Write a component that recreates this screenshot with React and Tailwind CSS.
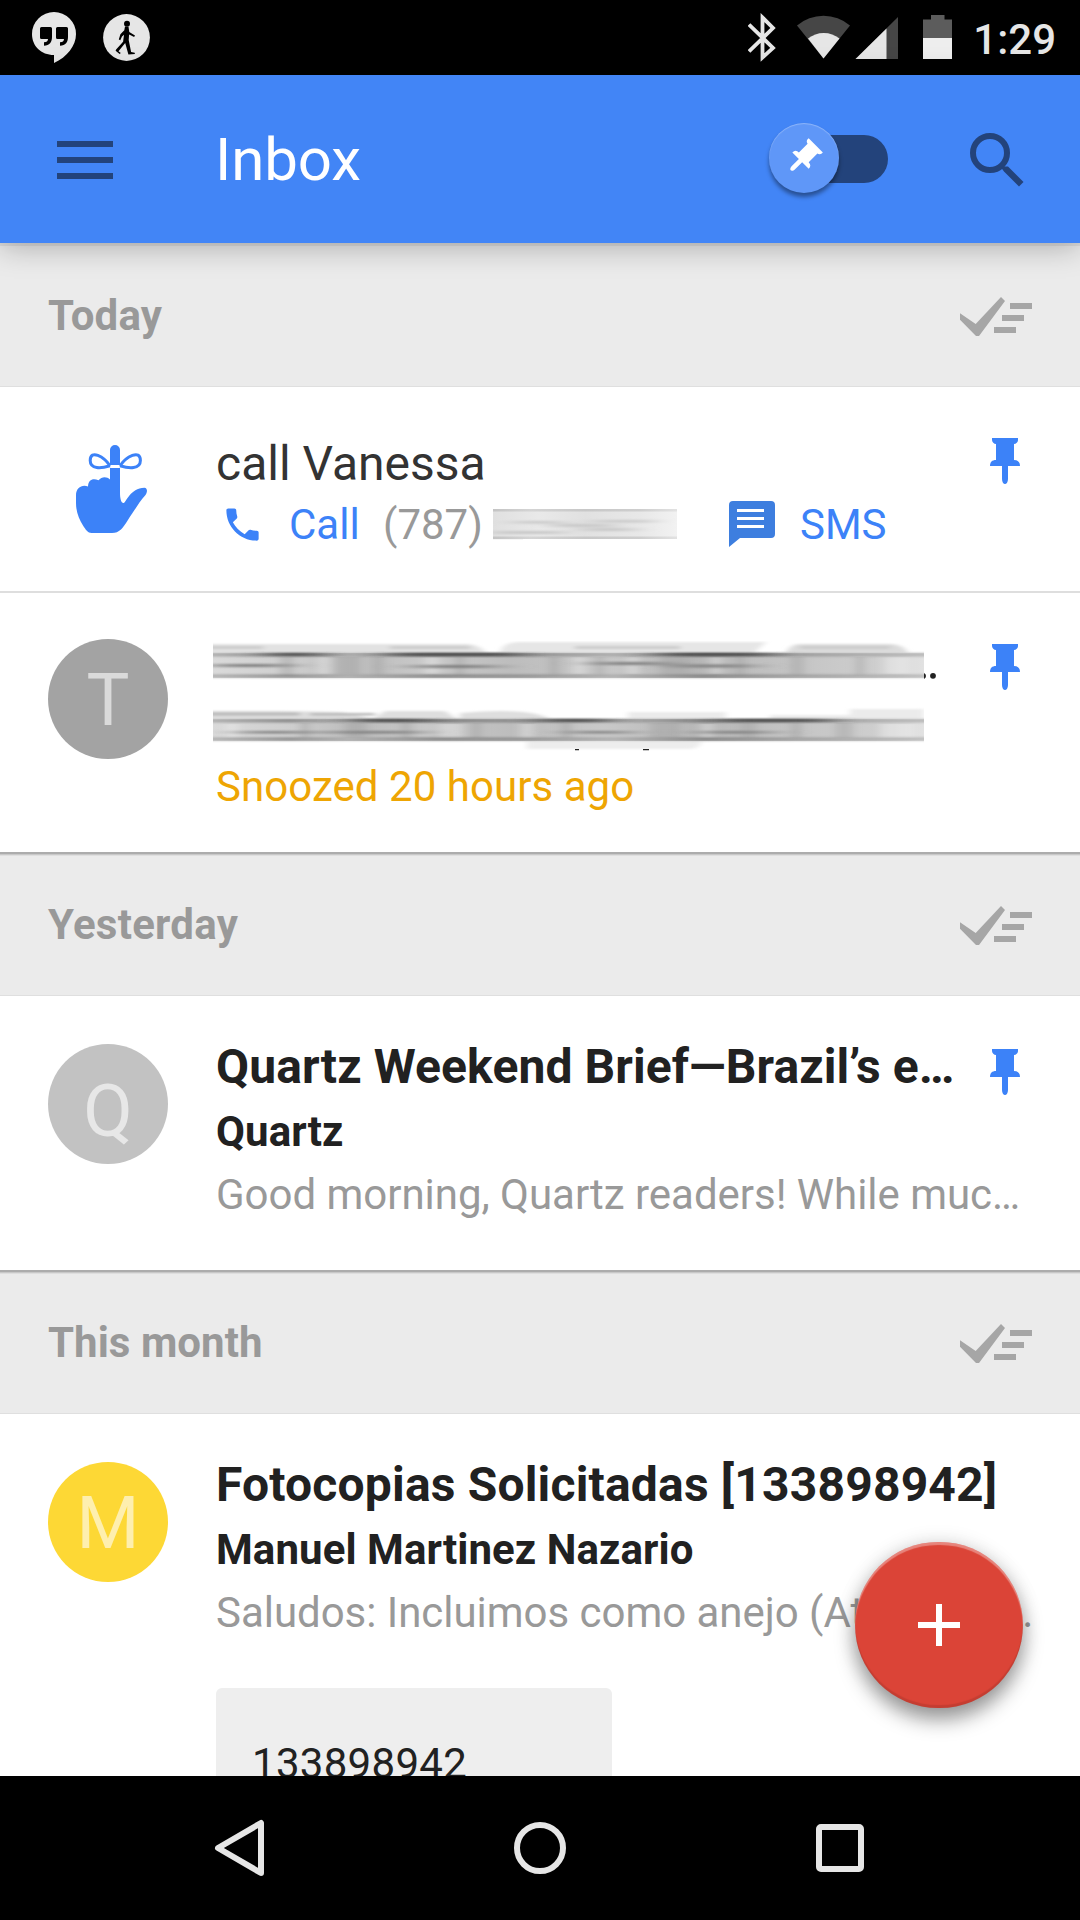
function StatusBar() {
  return (
    <div className="flex h-[75px] shrink-0 items-start justify-between bg-black">
      <div className="flex pl-8 pt-3">
        <svg className="h-[51px] w-11" viewBox="0 0 44 51">
          <path
            d="M22 0a22 22 0 0 0-22 22c0 12 9 21 22 21v8C35 45 44 34 44 22A22 22 0 0 0 22 0z"
            fill="#e6e6e6"
          />
          <path
            d="M9.500 15h9a1.500 1.500 0 0 1 1.500 1.500V25c0 5-2.500 8.700-8 8.700v-3.400c2.700 0 4-1.300 4-3.300h-6.500a1.500 1.500 0 0 1-1.500-1.500v-9A1.500 1.500 0 0 1 9.500 15zM25.500 15h9a1.500 1.500 0 0 1 1.500 1.500V25c0 5-2.500 8.700-8 8.700v-3.400c2.700 0 4-1.300 4-3.300h-6.500a1.500 1.500 0 0 1-1.500-1.500v-9A1.500 1.500 0 0 1 25.500 15z"
            fill="#000"
          />
        </svg>
        <svg className="ml-[27px] mt-0.5 h-[47px] w-[47px]" viewBox="0 0 47 47">
          <circle cx="23.500" cy="23.500" r="23.400" fill="#e6e6e6" />
          <circle cx="24" cy="9.800" r="3" fill="#000" />
          <path
            d="M22 12.500l3.500.3.800 5.200 5.700 3.500-.9 1.600-5-2.600-.4 5.500 2.400 12 3.600.7.200 1.400-6.500.3-3.200-11.500-6.700 8.300 2.300 1.900-1.200.9-4-3.200.5-1.300 7-7.800.9-7-2 1.800-1.700 3.700-1.500-.6 1.600-5.300 3.900-4z"
            fill="#000"
          />
        </svg>
      </div>
      <div className="flex pr-6">
        <svg className="h-[75px] w-[205px]" viewBox="748 0 205 75">
          <path
            d="M749 24.500L773 48 762.500 57.500V17.500L773 28 749 51.500"
            fill="none"
            stroke="#e6e6e6"
            strokeWidth="3.800"
          />
          <path d="M823.500 58.500L797 25.500a41 41 0 0 1 53 0z" fill="#464646" />
          <path d="M823.500 58.500L808 38.500a25 25 0 0 1 31.500 0z" fill="#e6e6e6" />
          <path d="M898 17v42h-42.500z" fill="#464646" />
          <path d="M886.500 28.500V59h-31z" fill="#e6e6e6" />
          <path d="M931 15h13.500v4.500h7.500V38h-29V19.500h8z" fill="#5c5c5c" />
          <path d="M923 38h29v21h-29z" fill="#eee" />
        </svg>
        <span className="pl-[20px] pt-[15px] text-[42px] font-medium leading-[49px] text-[#e6e6e6]">1:29</span>
      </div>
    </div>
  );
}

function AppBar() {
  return (
    <div className="relative z-10 flex h-[168px] shrink-0 items-center bg-[#4285f6] pl-[57px] shadow-[0_3px_0_rgba(0,0,0,0.06),0_4px_28px_rgba(0,0,0,0.27)]">
      <div className="flex w-[56px] flex-col gap-[10px] pt-[2px]">
        <div className="h-1.5 bg-[#23437b]" />
        <div className="h-1.5 bg-[#23437b]" />
        <div className="h-1.5 bg-[#23437b]" />
      </div>
      <h1 className="ml-[102px] pt-px text-[60px] font-normal leading-[70px] tracking-[-0.1px] text-white">Inbox</h1>
      <div className="ml-auto flex items-start pr-14">
        <div className="relative mt-1 h-12 w-[117px] rounded-full bg-[#23437b]">
          <div className="absolute -left-0.5 -top-3 flex h-[70px] w-[70px] items-center justify-center rounded-full bg-[#5f97f8] shadow-[0_4px_4px_rgba(0,0,0,0.4),inset_0_1px_1px_rgba(255,255,255,0.3)]">
            <svg className="mr-[3px] h-[46px] w-[30px] rotate-45" viewBox="0 0 30 46">
              <path d={PIN_PATH} fill="#fff" transform="translate(3.500 5) scale(.77)" />
            </svg>
          </div>
        </div>
        <svg className="ml-[82px] mt-0.5 h-[54px] w-[54px]" viewBox="0 0 54 54">
          <circle cx="20" cy="20" r="17" fill="none" stroke="#23437b" strokeWidth="6" />
          <path d="M34 33.500h4L53.500 49l-4.500 4.500L34 38.500l-3-4z" fill="#23437b" />
        </svg>
      </div>
    </div>
  );
}

const PIN_PATH =
  "M2 0h26v2c0 2-2 4-4 4v16c4 0 6 2 6 6H18v13c0 3-1.500 5-3 5s-3-2-3-5V28H0c0-4 2-6 6-6V6C4 6 2 4 2 2z";

function Pin({ className }) {
  return (
    <svg className={`h-[46px] w-[30px] shrink-0 ${className}`} viewBox="0 0 30 46">
      <path d={PIN_PATH} fill="#3c82f8" />
    </svg>
  );
}

function SectionHeader({ title, raised, titleClass = "" }) {
  return (
    <div
      className={`flex h-36 shrink-0 items-center justify-between border-b border-[#dfdfdf] bg-[#ebebeb] px-12 ${
        raised ? "shadow-[inset_0_2px_0_#acacac,inset_0_3px_0_#c8c8c8,inset_0_4px_0_#dedede]" : ""
      }`}
    >
      <h2 className={`pt-[3px] text-[42px] font-bold leading-[50px] text-[#999] ${titleClass}`}>{title}</h2>
      <svg className="mt-[3px] h-[39px] w-[72px]" viewBox="0 0 72 39" fill="#a6a6a6">
        <path d="M0 16.300L15.700 27 41 0l4 4L20.500 37l-1.500 2h-3L0 22.700z" />
        <path d="M50 6h22v6H50zM42 18h22v6H42zM34 30h22v6H34z" />
      </svg>
    </div>
  );
}

function Avatar({ letter, className, letterClass }) {
  return (
    <div className={`flex h-[120px] w-[120px] shrink-0 items-center justify-center rounded-full ${className}`}>
      <span className={`text-[72px] leading-[84px] ${letterClass}`}>{letter}</span>
    </div>
  );
}

function ReminderIcon() {
  return (
    <svg className="ml-7 mr-[69px] mt-[58px] h-[88px] w-[71px] shrink-0" viewBox="0 0 71 88">
      <path
        d="M34 20V5a5 5 0 0 1 10 0v15zM34 23h10v25c0 5 1 10 3.500 10S54 43 68.500 42.700c3 .3 3.200 4 1 7.300C64 56 60 63 56.500 68S48 82 45 84.500 40 88 36 88H15.500C12 88 9.500 84.500 7 80.500 3 74 0 67 0 58v-8c0-7 6-11 12-8.500.2-7 5-8.500 10.500-6.300C26 31 31 31.500 34 34.500z"
        fill="#3c82f8"
      />
      <path
        d="M34 20.800C28 12 14.300 3.800 14.200 15.500 14.300 24.500 25 23.500 34 20.800M44 20.800C50 12 64.300 3.800 64.400 15.500 64.300 24.500 53 23.500 44 20.800"
        fill="none"
        stroke="#3c82f8"
        strokeWidth="3"
      />
    </svg>
  );
}

// Smeared bar that hides a private phone number.
function SmearedNumber() {
  return (
    <svg className="ml-[11px] h-[32px] w-[184px] shrink-0" viewBox="0 0 184 32">
      <defs>
        <linearGradient id="num" x1="0" x2="1">
          <stop offset="0" stopColor="#e0e0e0" />
          <stop offset=".25" stopColor="#e9e9e9" />
          <stop offset=".5" stopColor="#e1e1e1" />
          <stop offset=".8" stopColor="#e8e8e8" />
          <stop offset="1" stopColor="#f2f2f2" />
        </linearGradient>
        <linearGradient id="numLine" x1="0" x2="1">
          <stop offset="0" stopColor="#c4c4c4" />
          <stop offset=".2" stopColor="#d4d4d4" />
          <stop offset=".5" stopColor="#c8c8c8" />
          <stop offset=".8" stopColor="#cecece" />
          <stop offset="1" stopColor="#e2e2e2" />
        </linearGradient>
        <filter id="numSmear" x="-20%" y="-20%" width="140%" height="140%">
          <feGaussianBlur stdDeviation="12 1.2" />
        </filter>
      </defs>
      <path d="M0 1h184v30H0z" fill="url(#num)" />
      <path d="M0 1h184v2.500H0zM0 28.500h184V31H0z" fill="url(#numLine)" />
      <path
        d="M20 13h50v2.500H20zM60 16h60v3H60zM0 23h70v3H0zM100 12h60v2.500h-60zM90 20h50v3H90z"
        fill="#c8c8c8"
        filter="url(#numSmear)"
      />
      <path d="M0 31h30v1H0z" fill="#f6f6f6" />
    </svg>
  );
}

// Smeared bars that hide a private subject and sender.
function SmearedText() {
  return (
    <svg className="-ml-[3px] h-[112px] w-[726px]" viewBox="213 641 726 112">
      <defs>
        <linearGradient id="body" x1="0" x2="1">
          <stop offset="0" stopColor="#dadada" />
          <stop offset=".12" stopColor="#cdcdcd" />
          <stop offset=".2" stopColor="#bcbcbc" />
          <stop offset=".3" stopColor="#c9c9c9" />
          <stop offset=".42" stopColor="#bdbdbd" />
          <stop offset=".55" stopColor="#c9c9c9" />
          <stop offset=".68" stopColor="#b7b7b7" />
          <stop offset=".8" stopColor="#c3c3c3" />
          <stop offset=".93" stopColor="#cecece" />
          <stop offset="1" stopColor="#e2e2e2" />
        </linearGradient>
        <linearGradient id="edge" x1="0" x2="1">
          <stop offset="0" stopColor="#b4b4b4" />
          <stop offset=".12" stopColor="#8a8a8a" />
          <stop offset=".2" stopColor="#adadad" />
          <stop offset=".32" stopColor="#828282" />
          <stop offset=".45" stopColor="#929292" />
          <stop offset=".56" stopColor="#adadad" />
          <stop offset=".68" stopColor="#808080" />
          <stop offset=".8" stopColor="#9c9c9c" />
          <stop offset="1" stopColor="#bcbcbc" />
        </linearGradient>
        <clipPath id="smearArea">
          <path d="M213 641h711v112H213z" />
        </clipPath>
        <filter id="streaks" filterUnits="userSpaceOnUse" x="150" y="636" width="840" height="120">
          <feGaussianBlur stdDeviation="18 1" />
        </filter>
        <filter id="blobs" filterUnits="userSpaceOnUse" x="150" y="636" width="840" height="120">
          <feGaussianBlur stdDeviation="4 0.6" />
        </filter>
        <filter id="soft" filterUnits="userSpaceOnUse" x="150" y="636" width="840" height="120">
          <feGaussianBlur stdDeviation="3 0.8" />
        </filter>
      </defs>
      <g clipPath="url(#smearArea)">
        <g filter="url(#soft)">
          <path d="M200 644h268q12 1 18 9H200z" fill="#e2e2e2" />
          <path d="M500 653q2-11 20-11h246l-12 11z" fill="#e6e6e6" />
          <path d="M786 653q4-9 14-9h92q12 1 16 9z" fill="#dcdcdc" />
          <path d="M200 711h83l60 1 30 7H200zM373 719l12-8h60l12 8zM460 713q70-6 90 6h-90z" fill="#dedede" />
          <path d="M628 712h98v7h-98zM770 715h80v-6h74v10H770z" fill="#ebebeb" />
          <path d="M527 741h175q-3 8-12 8H527z" fill="#ededed" />
          <path d="M200 646h63v3h-63zM390 646h80v3h-80zM575 646h105v3H575zM800 646h90v3h-90z" fill="#cbcbcb" />
          <path d="M200 712.500h100v3H200zM310 713h65v2.500h-65z" fill="#b8b8b8" />
        </g>
        <path d="M213 653h711v25H213z" fill="url(#body)" />
        <path d="M213 719h711v22H213z" fill="url(#body)" />
        <g fill="#9d9d9d" fillOpacity=".4" filter="url(#blobs)">
          <path d="M280 657h14v19h-14zM335 657h24v19h-24zM372 657h12v19h-12zM455 657h10v19h-10zM548 657h12v19h-12zM595 657h10v19h-10zM660 657h30v19h-30zM735 657h10v19h-10zM790 657h14v19h-14zM855 657h10v19h-10z" />
          <path d="M300 723h10v15h-10zM345 723h22v15h-22zM400 723h12v15h-12zM470 723h12v15h-12zM560 723h12v15h-12zM650 723h30v15h-30zM740 723h16v15h-16zM790 723h12v15h-12zM835 723h18v15h-18z" />
        </g>
        <g fill="#fff" fillOpacity=".25" filter="url(#blobs)">
          <path d="M318 657h12v17h-12zM425 657h14v17h-14zM572 657h14v17h-14zM627 657h12v17h-12zM710 657h12v17h-12zM885 657h24v17h-24z" />
          <path d="M226 724h12v14h-12zM440 724h22v14h-22zM520 724h14v14h-14zM700 724h14v14h-14zM880 724h34v14h-34z" />
        </g>
        <g filter="url(#soft)">
          <path d="M200 653h740v3.500H200zM200 674.500h740v3H200z" fill="url(#edge)" />
          <path d="M200 719h740v3.500H200zM200 737.500h740v3H200z" fill="url(#edge)" />
        </g>
        <g fill="#808080" filter="url(#streaks)">
          <path d="M213 664h75v3h-75zM415 665h80v3h-80zM595 662h70v3h-70zM675 664.500h75v3h-75z" />
          <path d="M240 731h70v2.500h-70zM330 731h90v2.500h-90zM570 731h60v2.500h-60zM700 731h70v2.500h-70z" />
          <path d="M270 653h50v3h-50zM390 653h130v3H390zM660 653h110v3H660z" fill="#4c4c4c" />
          <path d="M350 719h80v3h-80zM540 719h70v3h-70zM720 719h110v3H720z" fill="#4c4c4c" />
        </g>
      </g>
      <path d="M924 673q2 1 2 3t-2 3zM575 749h4v1.200h-4zM643 749h6v1.200h-6z" fill="#222" />
      <circle cx="933" cy="675.800" r="2.900" fill="#222" />
    </svg>
  );
}

function ReminderRow() {
  return (
    <div className="flex h-[206px] shrink-0 border-b-2 border-[#dedede] bg-white pl-12 pr-[60px]">
      <ReminderIcon />
      <div className="flex flex-1 flex-col">
        <div className="mt-[49px] text-[48px] leading-[56px] text-[#333]">call Vanessa</div>
        <div className="mt-[7px] flex h-[50px] items-center text-[42px] leading-[49px]">
          <svg className="ml-[5px] h-[43px] w-[43px] shrink-0" viewBox="0 0 24 24">
            <path
              d="M6.620 10.790c1.440 2.830 3.760 5.140 6.590 6.590l2.200-2.200c.270-.270.670-.360 1.020-.240 1.120.370 2.330.570 3.570.570.550 0 1 .450 1 1V20c0 .550-.450 1-1 1-9.390 0-17-7.610-17-17 0-.550.450-1 1-1h3.500c.550 0 1 .450 1 1 0 1.250.200 2.450.570 3.570.110.350.030.740-.250 1.020l-2.200 2.200z"
              fill="#3c82f8"
            />
          </svg>
          <span className="ml-[25px] w-[70px] text-[#3c82f8]">Call</span>
          <span className="ml-[24px] w-[99px] text-[#999]">(787)</span>
          <SmearedNumber />
          <svg className="ml-[52px] h-[46px] w-[46px] shrink-0" viewBox="0 0 46 46">
            <path d="M4 0h38a4 4 0 0 1 4 4v29a4 4 0 0 1-4 4H11L0 46V4a4 4 0 0 1 4-4z" fill="#3d7edf" />
            <path d="M8 8h27v3H8zM8 16h27v3H8zM8 24h27v3H8z" fill="#fff" />
          </svg>
          <span className="ml-[25px] text-[#3c82f8]">SMS</span>
        </div>
      </div>
      <Pin className="mt-[51px]" />
    </div>
  );
}

function SnoozedRow() {
  return (
    <div className="flex h-[259px] shrink-0 bg-white pl-12 pr-[60px]">
      <Avatar letter="T" className="mt-[46px] bg-[#a3a3a3]" letterClass="pt-[3px] text-[#dadada]" />
      <div className="ml-12 flex flex-1 flex-col pt-12">
        <SmearedText />
        <div className="mt-[9px] text-[42px] leading-[49px] tracking-[0.05px] text-[#eea503]">Snoozed 20 hours ago</div>
      </div>
      <Pin className="mt-[51px]" />
    </div>
  );
}

function MailText({ subject, sender, snippet, subjectClass }) {
  return (
    <>
      <div className={`whitespace-nowrap text-[48px] font-bold leading-[56px] text-[#212121] ${subjectClass}`}>
        {subject}
      </div>
      <div className="mt-[12px] whitespace-nowrap text-[42px] font-bold leading-[49px] tracking-[0.08px] text-[#212121]">
        {sender}
      </div>
      <div className="mt-[14px] whitespace-nowrap text-[42px] leading-[49px] tracking-[-0.03px] text-[#999]">
        {snippet}
      </div>
    </>
  );
}

function NavBar() {
  return (
    <div className="flex h-36 shrink-0 items-center justify-between bg-black pl-[213px] pr-[216px]">
      <svg className="h-[58px] w-[51px]" viewBox="0 0 51 58">
        <path d="M5 29L48 4v50z" fill="none" stroke="#e6e6e6" strokeWidth="6" strokeLinejoin="round" />
      </svg>
      <div className="h-[52px] w-[52px] rounded-full border-[6px] border-[#e6e6e6]" />
      <div className="h-12 w-12 rounded-[5px] border-[6px] border-[#e6e6e6]" />
    </div>
  );
}

export default function App() {
  return (
    <div className="relative flex h-[1920px] w-[1080px] flex-col overflow-hidden bg-white font-['Roboto',sans-serif]">
      <StatusBar />
      <AppBar />
      <SectionHeader title="Today" titleClass="tracking-[0.2px]" />
      <ReminderRow />
      <SnoozedRow />
      <SectionHeader title="Yesterday" raised titleClass="tracking-[0.25px]" />
      <div className="flex h-[274px] shrink-0 bg-white pl-12 pr-[60px]">
        <Avatar letter="Q" className="mt-12 bg-[#c2c2c2]" letterClass="pt-[16px] text-[#e7e7e7]" />
        <div className="ml-12 w-[774px] pt-[43px]">
          <MailText
            subject="Quartz Weekend Brief—Brazil’s e…"
            subjectClass="tracking-[0.1px]"
            sender="Quartz"
            snippet="Good morning, Quartz readers! While muc…"
          />
        </div>
        <Pin className="mt-[53px]" />
      </div>
      <SectionHeader title="This month" raised titleClass="tracking-[0.05px]" />
      <div className="flex min-h-0 flex-1 overflow-hidden bg-white pl-12">
        <Avatar letter="M" className="mt-12 bg-[#fdd835]" letterClass="pt-[3px] text-[#feefae]" />
        <div className="ml-12 pt-[43px]">
          <MailText
            subject="Fotocopias Solicitadas [133898942]"
            subjectClass="tracking-[0.18px]"
            sender="Manuel Martinez Nazario"
            snippet="Saludos: Incluimos como anejo (Attachme…"
          />
          <div className="mt-[51px] h-40 w-[396px] rounded-md bg-[#eee] pl-9 pt-[51px] text-[42px] leading-[49px] tracking-[0.3px] text-[#212121]">
            133898942
          </div>
        </div>
      </div>
      <NavBar />
      <button className="absolute left-[855px] top-[1542px] flex h-[166px] w-[168px] items-center justify-center rounded-full bg-[#db4437] shadow-[0_12px_20px_rgba(0,0,0,0.38),0_0_20px_rgba(0,0,0,0.12),inset_0_3px_1px_rgba(255,255,255,0.35),inset_0_-3px_1px_rgba(0,0,0,0.1)]">
        <svg className="h-[42px] w-[42px]" viewBox="0 0 42 42">
          <path d="M18 0h6v18h18v6H24v18h-6V24H0v-6h18z" fill="#fff" />
        </svg>
      </button>
    </div>
  );
}
